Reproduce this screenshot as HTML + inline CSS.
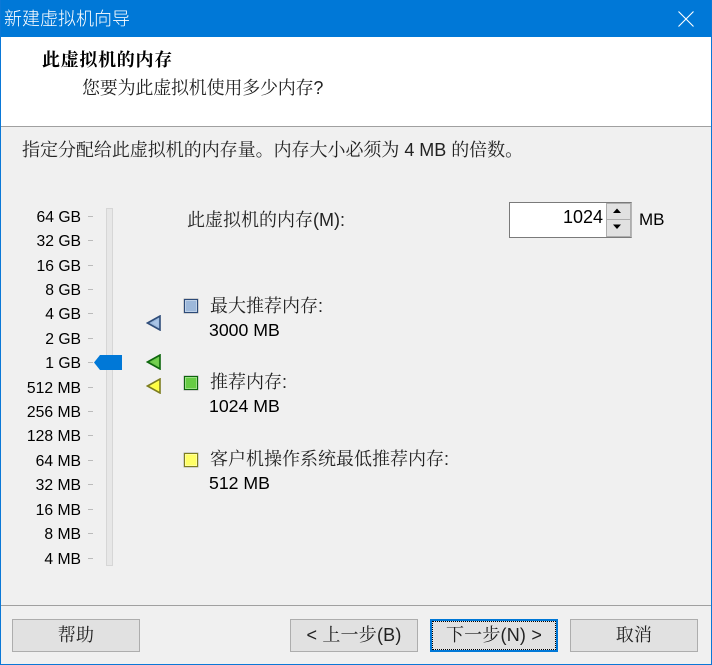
<!DOCTYPE html>
<html><head><meta charset="utf-8"><style>
html,body{margin:0;padding:0;width:712px;height:665px;overflow:hidden;background:#f0f0f0}
*{box-sizing:border-box}
body{position:relative;font-family:"Liberation Sans","Noto Serif CJK SC",serif;font-size:17px;color:#000}
.t{position:absolute;white-space:nowrap;line-height:24px;font-weight:400;font-family:"Liberation Sans","WenQuanYi Zen Hei",sans-serif;font-size:17.7px}
.c{font-family:"Liberation Sans","Noto Serif CJK SC",serif;font-size:18px;color:#222}
.r{position:absolute;white-space:nowrap;right:631px;margin-top:1px;line-height:24px;font-size:15.7px;font-family:"Liberation Sans",sans-serif}
.k{position:absolute;left:88px;width:5px;height:1px;background:#bbb}
.btn{position:absolute;top:619px;height:33px;background:#e1e1e1;border:1px solid #adadad;text-align:center;line-height:31px;font-size:18px;letter-spacing:.2px;color:#222;font-family:"Liberation Sans","Noto Serif CJK SC",serif}
.sq{position:absolute;left:184px;width:14px;height:14px;border:1px solid;box-shadow:inset 0 0 0 1px rgba(255,255,255,.35),0 0 0 .4px rgba(0,0,0,.35)}
</style></head><body>
<div style="position:absolute;inset:0;border:1px solid #0a78d7;border-top:0;pointer-events:none;z-index:5"></div>
<div style="position:absolute;left:0;top:0;width:712px;height:37px;background:#0078d7"></div>
<div class="t" style="left:4px;top:7px;color:#fff;font-size:18px;font-family:'Liberation Sans','Noto Sans CJK SC',sans-serif;font-weight:300">新建虚拟机向导</div>
<svg style="position:absolute;left:678px;top:11px" width="16" height="16"><path d="M.5 .5L15.5 15.5M15.5 .5L.5 15.5" stroke="#fff" stroke-width="1.1" fill="none"/></svg>
<div style="position:absolute;left:1px;top:37px;width:710px;height:90px;background:#fff;border-bottom:1px solid #a0a0a0"></div>
<div class="t c" style="left:42px;top:48px;font-weight:700;color:#000;letter-spacing:.7px">此虚拟机的内存</div>
<div class="t c" style="left:82px;top:76px;letter-spacing:-.2px">您要为此虚拟机使用多少内存?</div>
<div class="t c" style="left:22px;top:138px;letter-spacing:-.03px">指定分配给此虚拟机的内存量。内存大小必须为 4 MB 的倍数。</div>

<div class="r" style="top:205px">64 GB</div><div class="k" style="top:216px"></div>
<div class="r" style="top:229px">32 GB</div><div class="k" style="top:240px"></div>
<div class="r" style="top:254px">16 GB</div><div class="k" style="top:265px"></div>
<div class="r" style="top:278px">8 GB</div><div class="k" style="top:289px"></div>
<div class="r" style="top:302px">4 GB</div><div class="k" style="top:313px"></div>
<div class="r" style="top:327px">2 GB</div><div class="k" style="top:338px"></div>
<div class="r" style="top:351px">1 GB</div><div class="k" style="top:362px"></div>
<div class="r" style="top:376px">512 MB</div><div class="k" style="top:387px"></div>
<div class="r" style="top:400px">256 MB</div><div class="k" style="top:411px"></div>
<div class="r" style="top:424px">128 MB</div><div class="k" style="top:435px"></div>
<div class="r" style="top:449px">64 MB</div><div class="k" style="top:460px"></div>
<div class="r" style="top:473px">32 MB</div><div class="k" style="top:484px"></div>
<div class="r" style="top:498px">16 MB</div><div class="k" style="top:509px"></div>
<div class="r" style="top:522px">8 MB</div><div class="k" style="top:533px"></div>
<div class="r" style="top:547px">4 MB</div><div class="k" style="top:558px"></div>

<div style="position:absolute;left:106px;top:208px;width:7px;height:358px;background:#e7e7e7;border:1px solid #d6d6d6"></div>
<svg style="position:absolute;left:94px;top:355px" width="28" height="15"><path d="M28 0H6L0 7.5L6 15H28Z" fill="#0078d7"/></svg>

<svg style="position:absolute;left:146px;top:315px" width="15" height="16"><path d="M14 1V15L1.5 8Z" fill="#9ab8dc" stroke="#2f4d7a" stroke-width="1.6"/><path d="M12.5 4V12L6 8Z" fill="#a9c4e6"/></svg>
<svg style="position:absolute;left:146px;top:354px" width="15" height="16"><path d="M14 1V15L1.5 8Z" fill="#6cc84a" stroke="#0d660d" stroke-width="1.6"/><path d="M12.5 4V12L6 8Z" fill="#74d050"/></svg>
<svg style="position:absolute;left:146px;top:378px" width="15" height="16"><path d="M14 1V15L1.5 8Z" fill="#ffff50" stroke="#7d7d20" stroke-width="1.6"/><path d="M12.5 4V12L6 8Z" fill="#ffff40"/></svg>

<div class="t c" style="left:187px;top:208px">此虚拟机的内存(M):</div>
<div style="position:absolute;left:509px;top:202px;width:123px;height:36px;background:#fff;border:1px solid #7a7a7a;border-right-color:#b5b5b5"></div>
<div class="t" style="left:563px;top:205px;font-size:18px">1024</div>
<div style="position:absolute;left:606px;top:203px;width:25px;height:17px;background:#e1e1e1;border:1px solid #adadad"></div>
<div style="position:absolute;left:606px;top:219px;width:25px;height:18px;background:#e1e1e1;border:1px solid #adadad"></div>
<svg style="position:absolute;left:610px;top:206px" width="14" height="26"><path d="M3 7L7 2.5L11 7ZM3 18.5H11L7 23Z" fill="#000"/></svg>
<div class="t" style="left:639px;top:208px;font-size:17px">MB</div>

<div class="sq" style="top:299px;background:#9db8da;border-color:#2c4a78"></div>
<div class="t c" style="left:210px;top:294px">最大推荐内存:</div>
<div class="t" style="left:209px;top:318px">3000 MB</div>
<div class="sq" style="top:376px;background:#66cc44;border-color:#0b640b"></div>
<div class="t c" style="left:210px;top:370px">推荐内存:</div>
<div class="t" style="left:209px;top:394px">1024 MB</div>
<div class="sq" style="top:453px;background:#ffff66;border-color:#7d7d20"></div>
<div class="t c" style="left:210px;top:447px">客户机操作系统最低推荐内存:</div>
<div class="t" style="left:209px;top:471px">512 MB</div>

<div style="position:absolute;left:1px;top:605px;width:710px;height:1px;background:#a0a0a0"></div>
<div class="btn" style="left:12px;width:128px">帮助</div>
<div class="btn" style="left:290px;width:128px">&lt; 上一步(B)</div>
<div class="btn" style="left:430px;width:128px;border:2px solid #0078d7;line-height:29px"><span style="position:absolute;inset:0;border:1px dotted #000"></span>下一步(N) &gt;</div>
<div class="btn" style="left:570px;width:128px">取消</div>
</body></html>
